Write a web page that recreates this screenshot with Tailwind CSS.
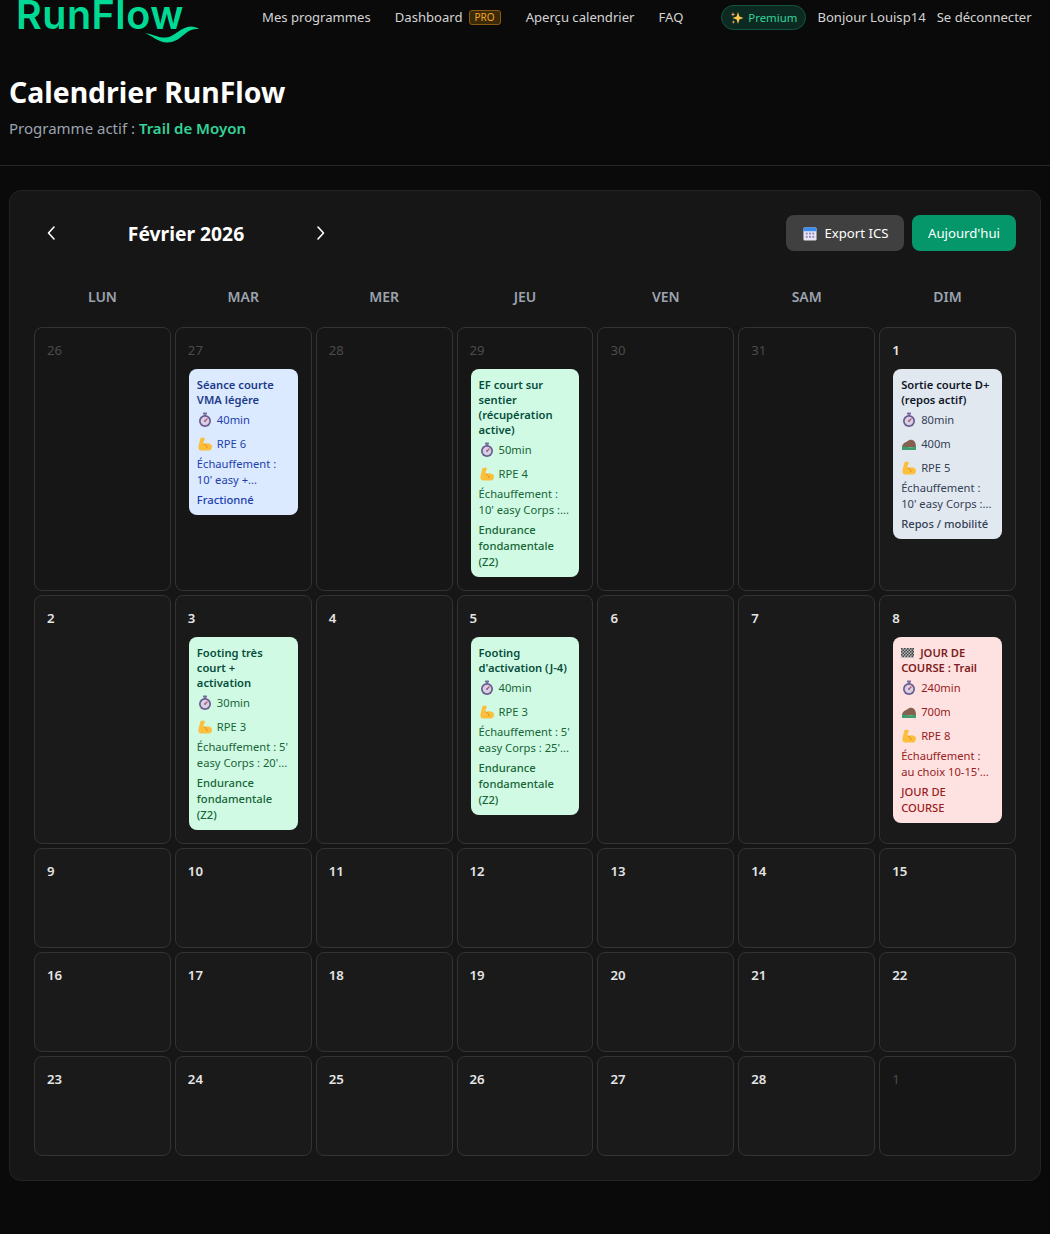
<!DOCTYPE html>
<html lang="fr">
<head>
    <meta charset="UTF-8">
    <title>Calendrier RunFlow</title>
    <script src="https://cdn.jsdelivr.net/npm/@tailwindcss/browser@4"></script>
</head>
<body class="bg-[#0a0a0a] font-['Noto_Sans','Open_Sans',sans-serif] text-white min-h-[1234px]">
    <header class="h-[46px] flex items-start overflow-hidden">
        <a class="relative block w-[262px] h-[46px] shrink-0 overflow-hidden">
            <span class="block pl-[16px] text-[39.5px] leading-[30px] font-['Inter',sans-serif] font-semibold tracking-[0.5px] text-[#00d994]">RunFlow</span>
            <svg class="absolute left-[144px] top-[24px]" width="56" height="20" viewBox="0 0 56 20"><path d="M1 9 C8 10 14 14 22 13.5 C31 13 37 2.5 47 2.5 C50 2.5 53 3.5 55 5 C50 4.5 46 5.5 42 9 C36 14 31 18.5 23 18.5 C15 18.5 8 12 1 9 Z" fill="#00d994"/></svg>
        </a>
        <nav class="flex items-center h-[35px] text-[13.1px] text-[#d4d4d4] whitespace-nowrap">
            <a>Mes programmes</a>
            <a class="ml-[24px]">Dashboard</a>
            <span class="ml-[6px] px-[5px] h-[15px] leading-[13px] text-[10px] rounded-[3px] border border-[#8a5a10] bg-[#3a2a08] text-[#f5a623]">PRO</span>
            <a class="ml-[25px]">Aperçu calendrier</a>
            <a class="ml-[24px]">FAQ</a>
            <span class="ml-[38px] h-[25px] w-[85px] flex items-center justify-center gap-[4px] rounded-full border border-[#14553f] bg-[#0c2a21] text-[11.4px] text-[#34d399]">
                <svg width="14" height="14" viewBox="0 0 14 14"><path d="M8 1 L9.4 5.4 L13.5 7 L9.4 8.6 L8 13 L6.6 8.6 L2.5 7 L6.6 5.4 Z" fill="#f9c74f"/><path d="M3 1 L3.6 2.8 L5.2 3.4 L3.6 4 L3 5.8 L2.4 4 L.8 3.4 L2.4 2.8 Z" fill="#f4a259"/><path d="M3.4 9 L3.9 10.4 L5.2 11 L3.9 11.5 L3.4 13 L2.9 11.5 L1.6 11 L2.9 10.4 Z" fill="#f4a259"/></svg>
                Premium
            </span>
            <a class="ml-[11px]">Bonjour Louisp14</a>
            <a class="ml-[11px]">Se déconnecter</a>
        </nav>
    </header>

    <section class="h-[120px] border-b border-[#262626] pl-[9px] pt-[27px]">
        <h1 class="text-[28.4px] leading-[38px] font-bold text-white">Calendrier RunFlow</h1>
        <p class="mt-[5px] text-[15px] leading-[24px] text-[#9ca3af]">Programme actif : <span class="font-semibold text-[#34d399]">Trail de Moyon</span></p>
    </section>

    <main class="mx-[9px] mt-[24px] rounded-[12px] border border-[#232323] bg-[#161616] p-[24px]">
        <div class="flex items-center justify-between h-[36px]">
            <div class="flex items-center">
                <button class="w-[36px] h-[36px] flex items-center justify-center -ml-[1px]">
                    <svg width="10" height="16" viewBox="0 0 10 16" fill="none" stroke="#fff" stroke-width="1.6" stroke-linecap="round" stroke-linejoin="round"><path d="M8 2 L2.5 8 L8 14"/></svg>
                </button>
                <h2 class="w-[232px] pl-[2px] text-center text-[19.3px] leading-[28px] pt-[1px] font-bold text-white">Février 2026</h2>
                <button class="w-[36px] h-[36px] flex items-center justify-center ml-[2px]">
                    <svg width="10" height="16" viewBox="0 0 10 16" fill="none" stroke="#fff" stroke-width="1.6" stroke-linecap="round" stroke-linejoin="round"><path d="M2 2 L7.5 8 L2 14"/></svg>
                </button>
            </div>
            <div class="flex items-center gap-[8px] text-[13.2px]">
                <button class="w-[118px] h-[36px] pl-[2px] pt-px rounded-[8px] bg-[#404040] flex items-center justify-center gap-[7px] text-white">
                    <svg width="14" height="14" viewBox="0 0 15 15"><rect x="0.5" y="0.5" width="14" height="14" rx="1.5" fill="#e8e6f4"/><path d="M0.5 2 a1.5 1.5 0 0 1 1.5 -1.5 h11 a1.5 1.5 0 0 1 1.5 1.5 v2.5 h-14 Z" fill="#3b8ef0"/><g fill="#8d86b8"><rect x="3" y="6" width="2" height="2"/><rect x="6.5" y="6" width="2" height="2"/><rect x="10" y="6" width="2" height="2"/><rect x="3" y="9.5" width="2" height="2"/><rect x="6.5" y="9.5" width="2" height="2"/><rect x="10" y="9.5" width="2" height="2"/></g></svg>
                    Export ICS
                </button>
                <button class="w-[104px] h-[36px] pt-px rounded-[8px] bg-[#059669] text-white">Aujourd'hui</button>
            </div>
        </div>

        <div class="grid grid-cols-7 gap-[4px] mt-[24px] mb-[8px] text-center text-[14px] leading-[44px] font-semibold text-[#9ca3af]">
            <div>LUN</div><div>MAR</div><div>MER</div><div>JEU</div><div>VEN</div><div>SAM</div><div>DIM</div>
        </div>

        <div id="grid" class="grid grid-cols-7 gap-[4px]"></div>
    </main>

    <script>
    const watch = `<svg class="w-4 h-4 shrink-0" viewBox="0 0 16 16"><rect x="6" y="0.5" width="4" height="2" rx="0.5" fill="#7a6a9e"/><rect x="7.2" y="2" width="1.6" height="2" fill="#7a6a9e"/><circle cx="8" cy="9" r="6" fill="#6a5c8c"/><circle cx="8" cy="9" r="4.3" fill="#d9cfe3"/><path d="M8 9 L10.4 6.6" stroke="#c2456b" stroke-width="1.3"/><circle cx="8" cy="9" r="1" fill="#8a6a9a"/></svg>`;
    const hill = `<svg class="w-4 h-4 shrink-0" viewBox="0 0 16 16"><path d="M1 11 C1.5 7.5 4 6.5 6 5.5 C8 3.5 11 3 12.5 4.5 C14.5 6 15 9 15 11 Z" fill="#85604f"/><path d="M1 10.5 C5 10 10 12.5 15 10.5 L15 14 L1 14 Z" fill="#3f9c6d"/></svg>`;
    const arm = `<svg class="w-4 h-4 shrink-0" viewBox="0 0 16 16"><path d="M3.5 2 L7 1.5 L8 3.5 L6.5 5.5 L7 8 C9 6.5 13 7 14.5 9 C15.5 11 15 14 12 14.5 L4 14.5 C2 14.5 1 12.5 1.5 10 Z" fill="#fbbf3c"/><path d="M7 8 C9 9 10 10 10 12" stroke="#e08a1e" fill="none"/></svg>`;
    const flag = `<svg class="inline-block w-[13px] h-[10px] mr-[6px] align-[-0.5px]" viewBox="0 0 13 10"><rect width="13" height="10" fill="#bbb"/><g fill="#444"><rect x="0" y="0" width="1.5" height="1.5"/><rect x="3" y="0" width="1.5" height="1.5"/><rect x="6" y="0" width="1.5" height="1.5"/><rect x="9" y="0" width="1.5" height="1.5"/><rect x="11.5" y="0" width="1.5" height="1.5"/><rect x="1.5" y="1.5" width="1.5" height="1.5"/><rect x="4.5" y="1.5" width="1.5" height="1.5"/><rect x="7.5" y="1.5" width="1.5" height="1.5"/><rect x="10.5" y="1.5" width="1.5" height="1.5"/><rect x="0" y="3" width="1.5" height="1.5"/><rect x="3" y="3" width="1.5" height="1.5"/><rect x="6" y="3" width="1.5" height="1.5"/><rect x="9" y="3" width="1.5" height="1.5"/><rect x="11.5" y="3" width="1.5" height="1.5"/><rect x="1.5" y="4.5" width="1.5" height="1.5"/><rect x="4.5" y="4.5" width="1.5" height="1.5"/><rect x="7.5" y="4.5" width="1.5" height="1.5"/><rect x="10.5" y="4.5" width="1.5" height="1.5"/><rect x="0" y="6" width="1.5" height="1.5"/><rect x="3" y="6" width="1.5" height="1.5"/><rect x="6" y="6" width="1.5" height="1.5"/><rect x="9" y="6" width="1.5" height="1.5"/><rect x="11.5" y="6" width="1.5" height="1.5"/><rect x="1.5" y="7.5" width="1.5" height="1.5"/><rect x="4.5" y="7.5" width="1.5" height="1.5"/><rect x="7.5" y="7.5" width="1.5" height="1.5"/><rect x="10.5" y="7.5" width="1.5" height="1.5"/></g></svg>`;

    const styles = {
        blue:  { box: 'bg-[#dbeafe]', title: 'text-[#1e3a8a]', text: 'text-[#1e40af]' },
        green: { box: 'bg-[#d1fae5]', title: 'text-[#064e3b]', text: 'text-[#166534]' },
        gray:  { box: 'bg-[#e2e8f0]', title: 'text-[#0f172a]', text: 'text-[#334155]' },
        red:   { box: 'bg-[#fee2e2]', title: 'text-[#7f1d1d]', text: 'text-[#991b1b]' },
    };

    const events = {
        '0-1': { s: 'blue', title: 'Séance courte VMA légère', min: '40min', rpe: 'RPE 6', desc: "Échauffement :<br>10' easy +...", tag: 'Fractionné' },
        '0-3': { s: 'green', title: 'EF court sur sentier (récupération active)', min: '50min', rpe: 'RPE 4', desc: "Échauffement :<br>10' easy Corps :...", tag: 'Endurance fondamentale (Z2)' },
        '0-6': { s: 'gray', title: 'Sortie courte D+ (repos actif)', min: '80min', dplus: '400m', rpe: 'RPE 5', desc: "Échauffement :<br>10' easy Corps :...", tag: 'Repos / mobilité' },
        '1-1': { s: 'green', title: 'Footing très court + activation', min: '30min', rpe: 'RPE 3', desc: "Échauffement : 5'<br>easy Corps : 20'...", tag: 'Endurance fondamentale (Z2)' },
        '1-3': { s: 'green', title: "Footing d'activation (J-4)", min: '40min', rpe: 'RPE 3', desc: "Échauffement : 5'<br>easy Corps : 25'...", tag: 'Endurance fondamentale (Z2)' },
        '1-6': { s: 'red', title: flag + 'JOUR DE COURSE : Trail', min: '240min', dplus: '700m', rpe: 'RPE 8', desc: "Échauffement :<br>au choix 10-15'...", tag: 'JOUR DE<br>COURSE' },
    };

    const weeks = [
        [[26,0],[27,0],[28,0],[29,0],[30,0],[31,0],[1,1]],
        [[2,1],[3,1],[4,1],[5,1],[6,1],[7,1],[8,1]],
        [[9,1],[10,1],[11,1],[12,1],[13,1],[14,1],[15,1]],
        [[16,1],[17,1],[18,1],[19,1],[20,1],[21,1],[22,1]],
        [[23,1],[24,1],[25,1],[26,1],[27,1],[28,1],[1,0]],
    ];

    function metaRow(icon, label) {
        return `<div class="flex items-center gap-[4px] h-4 mt-2 first:mt-0">${icon}<span>${label}</span></div>`;
    }

    function eventCard(ev) {
        const c = styles[ev.s];
        return `
            <div class="rounded-[8px] ${c.box} ${c.text} px-[8px] pt-[8px] pb-[7px] text-[11.2px] leading-[16px]">
                <div class="leading-[15px] font-semibold ${c.title}">${ev.title}</div>
                <div class="mt-[5px]">
                    ${metaRow(watch, ev.min)}
                    ${ev.dplus ? metaRow(hill, ev.dplus) : ''}
                    ${metaRow(arm, ev.rpe)}
                </div>
                <div class="mt-[4px] whitespace-nowrap">${ev.desc}</div>
                <div class="mt-[4px] font-medium">${ev.tag}</div>
            </div>`;
    }

    let html = '';
    weeks.forEach((week, w) => {
        week.forEach(([day, inMonth], d) => {
            const ev = events[w + '-' + d];
            html += `
                <div class="min-h-[100px] rounded-[8px] border border-[#333] p-[13px] ${inMonth ? 'bg-[#1a1a1a]' : 'bg-[#161616]'}">
                    <div class="text-[13.2px] leading-[20px] -mt-px -ml-px mb-[9px] ${inMonth ? 'font-semibold text-[#e5e5e5]' : 'text-[#4b4b4b]'}">${day}</div>
                    ${ev ? eventCard(ev) : ''}
                </div>`;
        });
    });
    document.getElementById('grid').innerHTML = html;
    </script>
</body>
</html>
